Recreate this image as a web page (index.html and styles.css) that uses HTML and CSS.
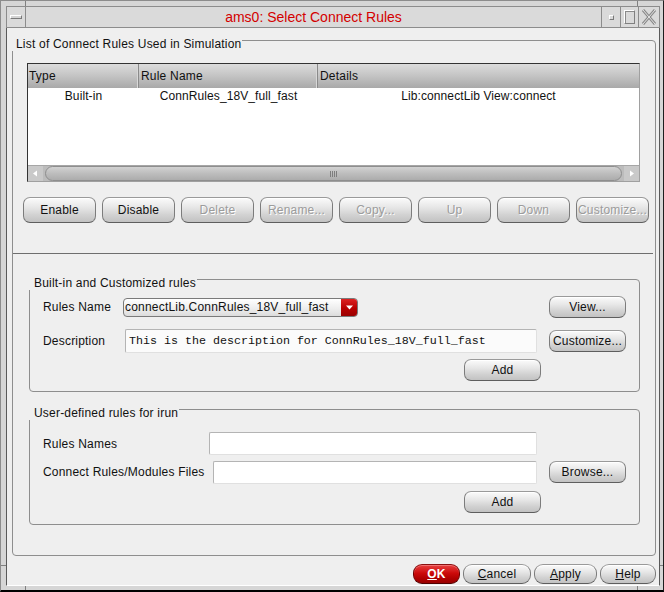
FILE: index.html
```html
<!DOCTYPE html>
<html>
<head>
<meta charset="utf-8">
<title>ams0: Select Connect Rules</title>
<link rel="stylesheet" href="styles.css">
</head>
<body>
<div class="window">
  <span class="tick tick-top-l"></span>
  <span class="tick tick-top-r"></span>
  <span class="tick tick-bot-l"></span>
  <span class="tick tick-bot-r"></span>
  <span class="tick tick-left-b"></span>
  <span class="tick tick-right-b"></span>

  <div class="titlebar">
    <div class="tb-btn tb-menu"><span class="menu-bar"></span></div>
    <div class="tb-title">ams0: Select Connect Rules</div>
    <div class="tb-btn tb-min"><span class="min-box"></span></div>
    <div class="tb-btn tb-max"><span class="max-box"></span></div>
    <div class="tb-btn tb-close">
      <svg width="16" height="16" viewBox="0 0 16 16">
        <path d="M2 1 L14 15 M14 1 L2 15" stroke="#8a8a8a" stroke-width="3" fill="none"/>
        <path d="M2 1 L14 15 M14 1 L2 15" stroke="#e4e4e4" stroke-width="1" fill="none"/>
      </svg>
    </div>
  </div>

  <div class="panel">
    <div class="group outer">
      <span class="group-title">List of Connect Rules Used in Simulation</span>

      <div class="table">
        <div class="thead cols">
          <div class="th first">Type</div>
          <div class="th">Rule Name</div>
          <div class="th last">Details</div>
        </div>
        <div class="tbody">
          <div class="tr cols">
            <div class="td">Built-in</div>
            <div class="td">ConnRules_18V_full_fast</div>
            <div class="td">Lib:connectLib View:connect</div>
          </div>
        </div>
        <div class="hscroll">
          <div class="sarrow">
            <svg width="7" height="7" viewBox="0 0 7 7"><path d="M5 0.5 L1 3.5 L5 6.5 Z" fill="#ffffff"/></svg>
          </div>
          <div class="strack">
            <div class="sthumb"><span class="grip"></span></div>
          </div>
          <div class="sarrow">
            <svg width="7" height="7" viewBox="0 0 7 7"><path d="M2 0.5 L6 3.5 L2 6.5 Z" fill="#ffffff"/></svg>
          </div>
        </div>
      </div>

      <div class="btnrow">
        <div class="btn">Enable</div>
        <div class="btn">Disable</div>
        <div class="btn disabled">Delete</div>
        <div class="btn disabled">Rename...</div>
        <div class="btn disabled">Copy...</div>
        <div class="btn disabled">Up</div>
        <div class="btn disabled">Down</div>
        <div class="btn disabled">Customize...</div>
      </div>

      <div class="sep"></div>

      <div class="group inner g1">
        <span class="group-title">Built-in and Customized rules</span>
        <div class="frow r1">
          <div class="flabel w80">Rules Name</div>
          <div class="combo">
            <div class="combo-text">connectLib.ConnRules_18V_full_fast</div>
            <div class="combo-arrow">
              <svg width="7" height="5" viewBox="0 0 7 5"><path d="M0 0.5 L7 0.5 L3.5 4.5 Z" fill="#ffffff"/></svg>
            </div>
          </div>
          <div class="btn gbtn push">View...</div>
        </div>
        <div class="frow r2">
          <div class="flabel w82">Description</div>
          <div class="field desc">This is the description for ConnRules_18V_full_fast</div>
          <div class="btn gbtn push">Customize...</div>
        </div>
        <div class="frow r3">
          <div class="btn gbtn push addbtn">Add</div>
        </div>
      </div>

      <div class="group inner g2">
        <span class="group-title">User-defined rules for irun</span>
        <div class="frow u1">
          <div class="flabel w166">Rules Names</div>
          <div class="field empty w328"></div>
        </div>
        <div class="frow u2">
          <div class="flabel w170">Connect Rules/Modules Files</div>
          <div class="field empty w324"></div>
          <div class="btn gbtn push">Browse...</div>
        </div>
        <div class="frow r3">
          <div class="btn gbtn push addbtn">Add</div>
        </div>
      </div>
    </div>

    <div class="dlg-buttons">
      <div class="dbtn ok"><u>O</u>K</div>
      <div class="dbtn cancel"><u>C</u>ancel</div>
      <div class="dbtn apply"><u>A</u>pply</div>
      <div class="dbtn help"><u>H</u>elp</div>
    </div>
  </div>
</div>
</body>
</html>
```

FILE: styles.css
```css
html, body {
  margin: 0;
  padding: 0;
  background: #d5d5d5;
}

body {
  font-family: "Liberation Sans", Arial, sans-serif;
  font-size: 12px;
  letter-spacing: 0.2px;
  color: #111;
}

.window {
  position: relative;
  width: 664px;
  height: 592px;
  box-sizing: border-box;
  background: #d6d6d6;
  border-left: 1px solid #8c8c8c;
  border-top: 1px solid #8c8c8c;
  border-right: 1px solid #1e1e1e;
  border-bottom: 2px solid #000;
  padding: 5px 3px 4px 5px;
  display: flex;
  flex-direction: column;
}

/* frame corner divisions */
.tick {
  position: absolute;
  background: #808080;
}
.tick-top-l { left: 24px; top: 0; width: 1px; height: 5px; }
.tick-top-r { left: 636px; top: 0; width: 1px; height: 5px; }
.tick-bot-l { left: 24px; bottom: 0; width: 1px; height: 4px; }
.tick-bot-r { left: 636px; bottom: 0; width: 1px; height: 4px; }
.tick-left-b { left: 0; top: 564px; width: 5px; height: 1px; }
.tick-right-b { right: 0; top: 564px; width: 3px; height: 1px; }

/* title bar */
.titlebar {
  height: 22px;
  box-sizing: border-box;
  border: 1px solid #8c8c8c;
  background: #dadada;
  display: flex;
  flex: none;
}

.tb-btn {
  box-sizing: border-box;
  display: flex;
  align-items: center;
  justify-content: center;
  flex: none;
}

.tb-menu {
  width: 19px;
  border-right: 1px solid #8c8c8c;
}

.menu-bar {
  width: 10px;
  height: 2px;
  border: 1px solid;
  border-color: #ffffff #7a7a7a #7a7a7a #ffffff;
  background: #d4d4d4;
}

.tb-title {
  flex: 1;
  text-align: center;
  color: #d40000;
  font-size: 14px;
  letter-spacing: 0;
  line-height: 20px;
}

.tb-min {
  width: 19px;
  border-left: 1px solid #8c8c8c;
}

.min-box {
  width: 3px;
  height: 3px;
  border: 1px solid;
  border-color: #ffffff #7a7a7a #7a7a7a #ffffff;
}

.tb-max {
  width: 18px;
  border-left: 1px solid #8c8c8c;
}

.max-box {
  width: 9px;
  height: 12px;
  border: 1px solid;
  border-color: #ffffff #808080 #808080 #ffffff;
  box-shadow: inset 1px 1px 0 #8a8a8a;
}

.tb-close {
  width: 21px;
  border-left: 1px solid #8c8c8c;
}

/* main panel */
.panel {
  flex: 1;
  min-height: 0;
  background: #efefef;
  border-left: 1px solid #5a5a5a;
  border-right: 1px solid #5a5a5a;
  border-bottom: 1px solid #ffffff;
  display: flex;
  flex-direction: column;
}

.group {
  position: relative;
  border: 1px solid #8e8e8e;
  border-radius: 4px;
}

.group-title {
  position: absolute;
  top: -4px;
  left: -2px;
  line-height: 14px;
  padding: 0 1px 0 5px;
  background: #efefef;
  white-space: nowrap;
}

.outer {
  margin: 12px 3px 0 5px;
}

.inner .group-title {
  padding-left: 6px;
}

/* table */
.table {
  margin: 22px 15px 0 14px;
  height: 119px;
  box-sizing: border-box;
  border: 1px solid;
  border-color: #333333 #a0a0a0 #a0a0a0 #333333;
  background: #ffffff;
  display: flex;
  flex-direction: column;
}

.cols {
  display: grid;
  grid-template-columns: 111px 179px 1fr;
}

.thead {
  height: 24px;
  flex: none;
  background: linear-gradient(to bottom, #dcdcdc 0%, #c6c6c6 45%, #a9a9a9 100%);
}

.th {
  line-height: 24px;
  padding-left: 2px;
  border-right: 1px solid #8a8a8a;
  box-shadow: inset -1px 0 0 #d8d8d8;
  white-space: nowrap;
  overflow: hidden;
}

.th.first { padding-left: 1px; }
.th.last { border-right: none; box-shadow: none; }

.tbody {
  flex: 1;
  background: #ffffff;
}

.tr {
  height: 16px;
  line-height: 16px;
}

.td {
  text-align: center;
  white-space: nowrap;
  letter-spacing: 0.1px;
}

.hscroll {
  height: 16px;
  flex: none;
  display: flex;
  box-sizing: border-box;
  background: #bcbcbc;
  border-top: 1px solid #a6a6a6;
}

.sarrow {
  width: 15px;
  flex: none;
  background: #c9c9c9;
  display: flex;
  align-items: center;
  justify-content: center;
}

.strack {
  flex: 1;
  padding: 0 2px;
  display: flex;
}

.sthumb {
  flex: 1;
  box-sizing: border-box;
  height: 15px;
  border: 1px solid #8e8e8e;
  border-radius: 8px;
  background: linear-gradient(to bottom, #d2d2d2 0%, #bdbdbd 50%, #acacac 100%);
  display: flex;
  align-items: center;
  justify-content: center;
}

.grip {
  width: 8px;
  height: 6px;
  background: repeating-linear-gradient(to right, #7e7e7e 0, #7e7e7e 1px, transparent 1px, transparent 2px);
}

/* buttons */
.btn {
  box-sizing: border-box;
  border: 1px solid;
  border-color: #9a9a9a #7c7c7c #5e5e5e #7c7c7c;
  border-radius: 7px;
  background: linear-gradient(to bottom, #fbfbfb 0%, #e6e6e6 40%, #d2d2d2 70%, #c2c2c2 100%);
  box-shadow: inset 0 1px 0 #ffffff;
  display: flex;
  align-items: center;
  justify-content: center;
  white-space: nowrap;
  flex: none;
}

.btn.disabled {
  color: #9c9c9c;
  text-shadow: 1px 1px 0 #ffffff;
}

.btnrow {
  display: flex;
  gap: 6px;
  margin: 15px 0 0 10px;
}

.btnrow .btn {
  width: 73px;
  height: 26px;
}

.sep {
  margin: 30px 2px 0 0;
  border-top: 1px solid #6e6e6e;
}

/* inner groups */
.inner {
  margin: 25px 15px 0 16px;
  padding: 0 13px;
}

.g1 {
  padding-top: 16px;
  padding-bottom: 10px;
}

.g2 {
  margin-top: 17px;
  margin-bottom: 30px;
  padding-top: 22px;
  padding-bottom: 11px;
}

.frow {
  display: flex;
  align-items: center;
}

.r1 { height: 22px; }
.r2 { height: 24px; margin-top: 11px; }
.r3 { height: 22px; margin-top: 6px; }
.u1 { height: 23px; }
.u2 { height: 26px; margin-top: 4px; }

.flabel {
  flex: none;
  white-space: nowrap;
}

.w80 { width: 80px; }
.w82 { width: 82px; }
.w166 { width: 166px; }
.w170 { width: 170px; }

.gbtn {
  width: 77px;
  height: 22px;
}

.push {
  margin-left: auto;
}

.addbtn {
  margin-right: 85px;
}

.combo {
  width: 235px;
  height: 19px;
  box-sizing: border-box;
  border: 1px solid #7a7a7a;
  border-radius: 4px;
  background: linear-gradient(to bottom, #ffffff 0%, #ececec 60%, #dcdcdc 100%);
  display: flex;
  overflow: hidden;
  flex: none;
}

.combo-text {
  flex: 1;
  padding-left: 1px;
  line-height: 17px;
  white-space: nowrap;
  overflow: hidden;
}

.combo-arrow {
  width: 16px;
  flex: none;
  background: linear-gradient(to bottom, #dc2222 0%, #b80000 55%, #9a0000 100%);
  display: flex;
  align-items: center;
  justify-content: center;
}

.field {
  box-sizing: border-box;
  border: 1px solid;
  border-color: #b4b4b4 #e0e0e0 #e0e0e0 #b4b4b4;
  border-radius: 2px;
  background: #fbfbfb;
  flex: none;
}

.field.desc {
  width: 412px;
  height: 24px;
  padding-left: 3px;
  font-family: "Liberation Mono", "Courier New", monospace;
  font-size: 11.67px;
  letter-spacing: 0;
  line-height: 22px;
  white-space: nowrap;
  overflow: hidden;
}

.field.empty {
  background: #ffffff;
  height: 23px;
}

.w328 { width: 328px; }
.w324 { width: 324px; }

/* dialog buttons */
.dlg-buttons {
  display: flex;
  justify-content: flex-end;
  gap: 3px;
  margin: 8px 3px 0 0;
}

.dbtn {
  box-sizing: border-box;
  height: 20px;
  border: 1px solid;
  border-color: #9a9a9a #7c7c7c #5e5e5e #7c7c7c;
  border-radius: 9px;
  background: linear-gradient(to bottom, #fbfbfb 0%, #e6e6e6 40%, #d2d2d2 70%, #c2c2c2 100%);
  box-shadow: inset 0 1px 0 #ffffff;
  display: flex;
  align-items: center;
  justify-content: center;
  font-size: 12px;
  white-space: nowrap;
}

.dbtn.ok {
  width: 47px;
  color: #ffffff;
  font-weight: bold;
  border-color: #8a1010 #700000 #500000 #700000;
  background: linear-gradient(to bottom, #e84040 0%, #cc0a0a 45%, #b00000 75%, #980000 100%);
  box-shadow: inset 0 1px 0 #f07070;
}

.dbtn.cancel { width: 68px; }
.dbtn.apply { width: 63px; }
.dbtn.help { width: 56px; }
```
